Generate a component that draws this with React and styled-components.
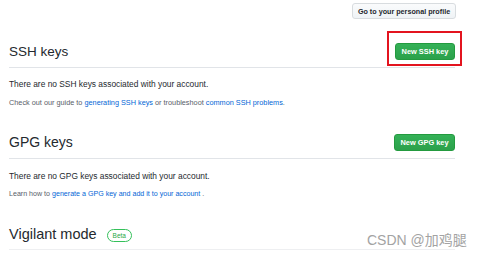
import React from "react";
import styled, { createGlobalStyle } from "styled-components";

const Global = createGlobalStyle`
  html, body { margin: 0; padding: 0; background: #fff; }
  body { font-family: "Liberation Sans", Arial, sans-serif; color: #24292e; }
`;

const Page = styled.div`
  position: relative;
  width: 482px;
  height: 258px;
  overflow: hidden;
  box-sizing: border-box;
  padding: 3px 27px 0 9px;
`;

const TopBar = styled.div`
  display: flex;
  justify-content: flex-end;
  margin-right: -1px;
`;

const GrayButton = styled.button`
  font-family: inherit;
  font-size: 7.2px;
  height: 16px;
  width: 104px;
  padding: 0;
  border: 1px solid #d8dcdf;
  border-radius: 3px;
  background: linear-gradient(#fafbfc, #eff3f6);
  color: #24292e;
  font-weight: bold;
`;

const Section = styled.section`
  margin-top: ${(p) => p.$mt}px;
`;

const Header = styled.div`
  display: flex;
  align-items: center;
  justify-content: space-between;
  min-height: 17px;
  padding-bottom: ${(p) => p.$pb ?? 7}px;
  border-bottom: 1px solid ${(p) => p.$line || "#e1e4e8"};
`;

const Title = styled.h2`
  margin: 0;
  font-weight: normal;
  font-size: ${(p) => p.$fs || 14}px;
  line-height: 17px;
  display: flex;
  align-items: center;
  gap: 10px;
`;

const Badge = styled.span`
  font-size: 6.5px;
  color: #28a745;
  border: 1px solid #34c05a;
  border-radius: 8px;
  padding: 0 5px;
  line-height: 11px;
  height: 11px;
  margin-top: 1px;
`;

const ButtonWrap = styled.div`
  position: relative;
  display: flex;
`;

const Highlight = styled.div`
  position: absolute;
  left: -8px;
  top: -12px;
  right: -7px;
  bottom: -6px;
  border: 2px solid #e3141f;
`;

const GreenButton = styled.button`
  font-family: inherit;
  font-size: 7.4px;
  font-weight: bold;
  color: #fff;
  width: ${(p) => p.$w}px;
  height: 17px;
  border: 1px solid #239a3f;
  border-radius: 3px;
  background: linear-gradient(#34b157, #2ba14b);
  padding: 0;
`;

const Lead = styled.p`
  margin: ${(p) => p.$mt}px 0 0;
  font-size: 8.4px;
  line-height: 10px;
  color: #24292e;
`;

const Note = styled.p`
  margin: ${(p) => p.$mt}px 0 0;
  font-size: ${(p) => p.$fs || 7.3}px;
  line-height: 10px;
  color: #586069;
`;

const Link = styled.a`
  color: #0366d6;
  text-decoration: none;
`;

const Watermark = styled.div`
  position: absolute;
  left: 367px;
  top: 232px;
  font-size: 14px;
  line-height: 17px;
  color: #a3a3a3;
  font-family: "Liberation Sans", "Noto Sans CJK SC", sans-serif;
`;

export default function App() {
  return (
    <>
      <Global />
      <Page>
        <TopBar>
          <GrayButton>Go to your personal profile</GrayButton>
        </TopBar>
        <Section $mt={24}>
          <Header>
            <Title $fs={13.5}>SSH keys</Title>
            <ButtonWrap>
              <Highlight />
              <GreenButton $w={60}>New SSH key</GreenButton>
            </ButtonWrap>
          </Header>
          <Lead $mt={11}>There are no SSH keys associated with your account.</Lead>
          <Note $mt={9}>
            Check out our guide to <Link>generating SSH keys</Link> or troubleshoot{" "}
            <Link>common SSH problems</Link>.
          </Note>
        </Section>
        <Section $mt={26}>
          <Header>
            <Title>GPG keys</Title>
            <GreenButton $w={61}>New GPG key</GreenButton>
          </Header>
          <Lead $mt={12}>There are no GPG keys associated with your account.</Lead>
          <Note $mt={8} $fs={7.1}>
            Learn how to <Link>generate a GPG key and add it to your account</Link> .
          </Note>
        </Section>
        <Section $mt={27}>
          <Header $pb={6} $line="#eeeff1">
            <Title $fs={14.5}>
              Vigilant mode <Badge>Beta</Badge>
            </Title>
          </Header>
        </Section>
        <Watermark>CSDN @加鸡腿</Watermark>
      </Page>
    </>
  );
}
